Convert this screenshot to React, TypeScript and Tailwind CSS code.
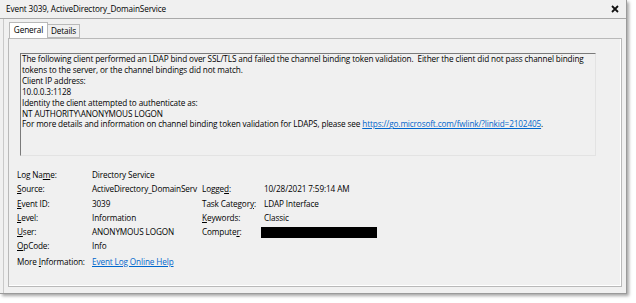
import { ReactNode } from "react";

const font = { fontFamily: '"Open Sans", "Liberation Sans", sans-serif', letterSpacing: "-0.12px" };

const messageLines: ReactNode[] = [
  "The following client performed an LDAP bind over SSL/TLS and failed the channel binding token validation.  Either the client did not pass channel binding",
  "tokens to the server, or the channel bindings did not match.",
  "Client IP address:",
  "10.0.0.3:1128",
  "Identity the client attempted to authenticate as:",
  "NT AUTHORITY\\ANONYMOUS LOGON",
  <>
    For more details and information on channel binding token validation for LDAPS, please see{" "}
    <span className="text-[#0066cc] underline">https://go.microsoft.com/fwlink/?linkid=2102405</span>.
  </>,
];

function Label({ before, u, after }: { before?: string; u: string; after?: string }) {
  return (
    <span>
      {before}
      <span className="underline">{u}</span>
      {after}
    </span>
  );
}

function CloseIcon() {
  return (
    <svg width="8" height="8" viewBox="0 0 8 8">
      <path d="M1 1L7 7M7 1L1 7" stroke="#111" strokeWidth="1.8" />
    </svg>
  );
}

export default function App() {
  return (
    <div className="h-[303px] w-[636px] bg-white text-[8.2px] text-black" style={font}>
      <div className="flex h-[294px] w-[627px] flex-col border-b border-r border-[#9a9a9a] bg-[#f0f0f0] shadow-[2px_2px_3px_rgba(0,0,0,0.35)]">
        <div className="flex h-[19px] shrink-0 items-center justify-between border-b border-[#a9a9a9] pl-[6px] pr-[7px]">
          <span>Event 3039, ActiveDirectory_DomainService</span>
          <CloseIcon />
        </div>

        <div className="ml-[3px] flex flex-1 flex-col border-l border-[#c9c9c9] pl-[4px] pt-[4px]">
          <div className="flex h-[15px] items-end pl-[1px]">
            <div className="relative z-10 flex h-[16px] w-[39px] items-center justify-center border border-b-0 border-[#b9b9b9] bg-white">
              General
            </div>
            <div className="flex h-[14px] w-[32px] items-center justify-center border border-l-0 border-[#b9b9b9] bg-[#f0f0f0]">
              Details
            </div>
          </div>

          <div className="flex h-[249px] w-[614px] flex-col border border-[#b9b9b9] shadow-[inset_-1px_-1px_0_#ffffff]">
            <div className="ml-[11px] mt-[14px] h-[103px] w-[576px] border-b border-l border-r border-t border-[#7a7a7a] border-b-[#e3e3e3] border-r-[#e3e3e3] pl-[1px] leading-[10.9px]">
              {messageLines.map((line, index) => (
                <div key={index} className="whitespace-pre">
                  {line}
                </div>
              ))}
            </div>

            <div className="ml-[8px] mt-[12px] grid auto-rows-[14.3px] grid-cols-[75px_110px_62px_1fr] items-center">
              <Label before="Log Na" u="m" after="e:" />
              <span>Directory Service</span>
              <span />
              <span />

              <Label u="S" after="ource:" />
              <span className="whitespace-nowrap">ActiveDirectory_DomainServ</span>
              <Label before="Logge" u="d" after=":" />
              <span>10/28/2021 7:59:14 AM</span>

              <Label u="E" after="vent ID:" />
              <span>3039</span>
              <Label before="Task Categor" u="y" after=":" />
              <span>LDAP Interface</span>

              <Label u="L" after="evel:" />
              <span>Information</span>
              <Label u="K" after="eywords:" />
              <span>Classic</span>

              <Label u="U" after="ser:" />
              <span>ANONYMOUS LOGON</span>
              <Label before="Compute" u="r" after=":" />
              <span className="-ml-[3px] h-[11px] w-[116px] bg-black" />

              <Label u="O" after="pCode:" />
              <span>Info</span>
              <span />
              <span />
            </div>

            <div className="ml-[8px] mt-[1px] flex h-[14px] items-center">
              <span className="w-[75px]">
                More <span className="underline">I</span>nformation:
              </span>
              <span className="text-[#0066cc] underline">Event Log Online Help</span>
            </div>
          </div>
        </div>
      </div>
    </div>
  );
}
